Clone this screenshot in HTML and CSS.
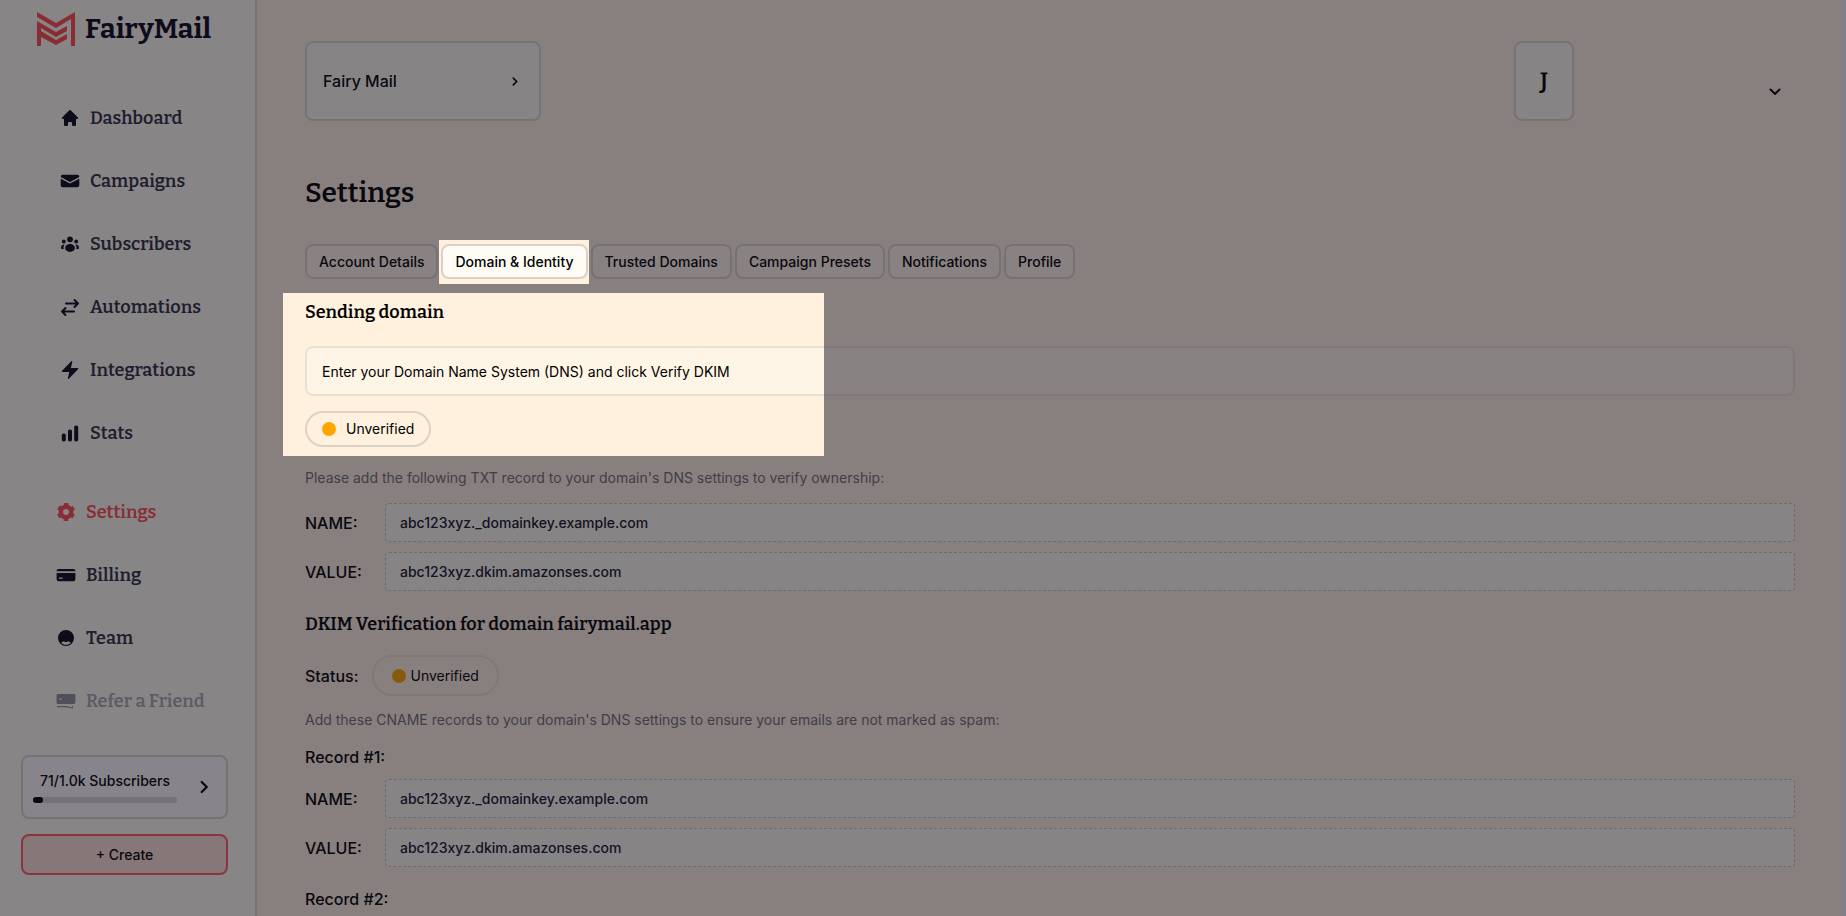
FILE: index.html
```html
<!DOCTYPE html>
<html lang="en">
<head>
  <meta charset="UTF-8">
  <meta name="viewport" content="width=device-width, initial-scale=1.0">
  <title>FairyMail - Settings</title>
  <link rel="stylesheet" href="styles.css">
</head>
<body>
  <aside class="sidebar">
    <a class="logo" href="#">
      <svg class="logo-mark" viewBox="0 0 38 34">
        <path d="M0 0l19 11L38 0v34h-4V7L19 16 0 5z"/>
        <path d="M0 9l19 11 11-6v5l-11 6L4 16v3l15 9 11-6v5l-11 6L4 25v9H0z"/>
      </svg>
      <span>FairyMail</span>
    </a>

    <nav class="menu">
      <a href="#">
        <svg viewBox="0 0 20 20"><path d="M9.3 2.3a1 1 0 0 1 1.4 0l7 7a1 1 0 0 1-.7 1.7h-1v6a1 1 0 0 1-1 1h-2a1 1 0 0 1-1-1v-2a1 1 0 0 0-1-1H9a1 1 0 0 0-1 1v2a1 1 0 0 1-1 1H5a1 1 0 0 1-1-1v-6H3a1 1 0 0 1-.7-1.7z"/></svg>
        Dashboard
      </a>
      <a href="#">
        <svg viewBox="0 0 20 20"><path d="M.7 6a2 2 0 0 1 2-2.200h14.600a2 2 0 0 1 2 2.200L10 10.900z"/><path d="M.7 7.700L10 12.600l9.300-4.900v6.500a2 2 0 0 1-2 2H2.700a2 2 0 0 1-2-2z"/></svg>
        Campaigns
      </a>
      <a href="#">
        <svg viewBox="0 0 20 20"><circle cx="10" cy="5.300" r="2.900"/><circle cx="3.800" cy="7.500" r="1.900"/><circle cx="16.200" cy="7.500" r="1.900"/><ellipse cx="10" cy="14" rx="4.900" ry="3.900"/><path d="M3.900 10.500c-2 .2-3.200 1.800-2.900 4 .8.600 1.700.7 2.700.6-.4-1.900 0-3.300.9-4.500zM16.100 10.500c2 .2 3.200 1.800 2.900 4-.8.600-1.700.7-2.700.6.400-1.900 0-3.300-.9-4.500z"/></svg>
        Subscribers
      </a>
      <a href="#">
        <svg class="line" viewBox="0 0 20 20"><path d="M6 6.500h12M14.500 3L18 6.500 14.500 10M14 14.500H2M5.500 11L2 14.500 5.500 18"/></svg>
        Automations
      </a>
      <a href="#">
        <svg viewBox="0 0 20 20"><path d="M11.300 1.300c.6-.5 1.200-.1 1 .6L10.900 8h6.600c.8 0 1 .7.500 1.200L8.900 18.800c-.6.500-1.200.1-1-.6L9.300 12H2.600c-.8 0-1-.7-.5-1.200z"/></svg>
        Integrations
      </a>
      <a href="#">
        <svg viewBox="0 0 20 20"><rect x="1.800" y="10.500" width="4" height="8" rx="1.700"/><rect x="8" y="6.500" width="4" height="12" rx="1.700"/><rect x="14.200" y="2.500" width="4" height="16" rx="1.700"/></svg>
        Stats
      </a>
    </nav>

    <nav class="menu menu-account">
      <a class="active" href="#">
        <svg class="gear" viewBox="0 0 20 20"><circle cx="10" cy="10" r="5.200" stroke-width="4.400"/><circle cx="10" cy="10" r="7.200" stroke-width="3.600" stroke-dasharray="4.200 3.340" transform="rotate(13.300 10 10)"/></svg>
        Settings
      </a>
      <a href="#">
        <svg viewBox="0 0 20 20"><path d="M.6 6.300c0-1.500.8-2.300 2-2.300h14.800c1.200 0 2 .8 2 2.300z"/><path fill-rule="evenodd" d="M.6 8h18.800v6.200a2 2 0 0 1-2 2H2.600a2 2 0 0 1-2-2zM3 12.500v1.300h3.500v-1.300z"/></svg>
        Billing
      </a>
      <a href="#">
        <svg viewBox="0 0 20 20"><path fill-rule="evenodd" d="M10 2a8 8 0 1 1 0 16 8 8 0 0 1 0-16zM5.200 14.700c1.200 1.400 2.900 2.100 4.800 2.100s3.600-.7 4.800-2.100c-1.200-1.200-2.500-1.500-3.200-1.200a3 3 0 0 1-3.200 0c-.7-.3-2 0-3.200 1.200z"/></svg>
        Team
      </a>
      <a class="disabled" href="#">
        <svg viewBox="0 0 20 20"><path fill-rule="evenodd" d="M2 3h16a1.400 1.400 0 0 1 1.400 1.400v7.200A1.400 1.400 0 0 1 18 13H2a1.400 1.400 0 0 1-1.400-1.400V4.400A1.400 1.400 0 0 1 2 3zm2.500 4a1 1 0 1 0 0 2 1 1 0 0 0 0-2z"/><path d="M1 15h9l6 1.200V15h1v2.600L9.500 16.200H1z"/></svg>
        Refer a Friend
      </a>
    </nav>

    <a class="usage" href="#">
      <span class="usage-info">
        <span>71/1.0k Subscribers</span>
        <span class="usage-bar"><span class="usage-fill" style="width: 7%"></span></span>
      </span>
      <svg class="arrow" viewBox="0 0 8 12"><path d="M1.500 1.500L6 6l-4.500 4.500"/></svg>
    </a>
    <button class="create" type="button">+ Create</button>
  </aside>

  <main>
    <header>
      <button class="workspace" type="button">
        Fairy Mail
        <svg class="arrow-small" viewBox="0 0 5 8"><path d="M1 1l3 3-3 3"/></svg>
      </button>
      <div class="user">
        <span class="avatar">J</span>
        <button class="user-menu" type="button" aria-label="Account menu">
          <svg class="arrow-down" viewBox="0 0 12 8"><path d="M1.500 1.500L6 6l4.500-4.500"/></svg>
        </button>
      </div>
    </header>

    <h1>Settings</h1>

    <div class="tabs">
      <button type="button">Account Details</button>
      <button class="selected" type="button">Domain &amp; Identity</button>
      <button type="button">Trusted Domains</button>
      <button type="button">Campaign Presets</button>
      <button type="button">Notifications</button>
      <button type="button">Profile</button>
    </div>

    <h2><label for="domain">Sending domain</label></h2>
    <input class="domain" id="domain" type="text" value="Enter your Domain Name System (DNS) and click Verify DKIM">
    <div class="badge"><span class="dot"></span>Unverified</div>

    <p class="hint">Please add the following TXT record to your domain's DNS settings to verify ownership:</p>
    <div class="records">
      <label for="txt-name">NAME:</label>
      <input id="txt-name" type="text" value="abc123xyz._domainkey.example.com" readonly>
      <label for="txt-value">VALUE:</label>
      <input id="txt-value" type="text" value="abc123xyz.dkim.amazonses.com" readonly>
    </div>

    <h2 class="dkim-title">DKIM Verification for domain fairymail.app</h2>
    <div class="status">
      <span>Status:</span>
      <div class="badge badge-light"><span class="dot"></span>Unverified</div>
    </div>

    <p class="hint hint-dkim">Add these CNAME records to your domain's DNS settings to ensure your emails are not marked as spam:</p>
    <h3>Record #1:</h3>
    <div class="records">
      <label for="cname-name">NAME:</label>
      <input id="cname-name" type="text" value="abc123xyz._domainkey.example.com" readonly>
      <label for="cname-value">VALUE:</label>
      <input id="cname-value" type="text" value="abc123xyz.dkim.amazonses.com" readonly>
    </div>
    <h3>Record #2:</h3>
  </main>

  <div class="backdrop"></div>
</body>
</html>
```

FILE: styles.css
```css
* {
  box-sizing: border-box;
}

body {
  font-family: Inter, 'Liberation Sans', sans-serif;
  font-size: 14px;
  line-height: 20px;
  margin: 0;
  height: 100vh;
  display: flex;
  overflow: hidden;
  color: #000;
  background-color: #fff1de;
}

button,
input {
  font: inherit;
  color: inherit;
}

a {
  color: inherit;
  text-decoration: none;
}

/* Sidebar */
.sidebar {
  width: 257px;
  flex-shrink: 0;
  padding: 12px 27px 0 21px;
  border-right: 2px solid #dad6cf;
  background-color: #fffaf0;
}

.logo {
  display: flex;
  align-items: center;
  gap: 10px;
  height: 34px;
  padding-left: 16px;
  font-family: Bitter, 'DejaVu Serif Condensed', serif;
  font-size: 28px;
  font-weight: 700;
  color: #0a0818;
}

.logo-mark {
  width: 38px;
  height: 34px;
  fill: #ff4a4a;
}

.menu {
  display: flex;
  flex-direction: column;
  gap: 39px;
  margin-top: 60px;
  padding-left: 39px;
  font-family: Bitter, 'DejaVu Serif Condensed', serif;
  font-size: 18px;
  font-weight: 600;
  line-height: 24px;
  color: #2f2c3b;
}

.menu a {
  display: flex;
  align-items: center;
  gap: 10px;
  white-space: nowrap;
}

.menu svg {
  width: 20px;
  height: 20px;
  fill: #0a0818;
}

.menu svg.line {
  fill: none;
  stroke: #0a0818;
  stroke-width: 2;
  stroke-linecap: round;
  stroke-linejoin: round;
}

.menu-account {
  margin-top: 55px;
  padding-left: 35px;
}

.menu .active {
  color: #ff4a4a;
}

.menu .gear {
  fill: none;
  stroke: #ff4a4a;
}

.menu .disabled {
  color: #a9a5a9;
}

.menu .disabled svg {
  fill: #8f8c92;
}

.usage {
  display: flex;
  justify-content: space-between;
  align-items: center;
  height: 64px;
  margin-top: 42px;
  padding: 0 17px 0 10px;
  border: 2px solid #dad6cf;
  border-radius: 8px;
  background-color: #fdfaf8;
  font-weight: 500;
}

.usage-info {
  display: flex;
  flex-direction: column;
  gap: 6px;
  width: 144px;
  text-align: center;
}

.usage-bar {
  height: 6px;
  border-radius: 3px;
  background-color: #d8d4d0;
}

.usage-fill {
  display: block;
  height: 6px;
  min-width: 10px;
  border-radius: 3px;
  background-color: #000;
}

.arrow,
.arrow-small,
.arrow-down {
  fill: none;
  stroke: #000;
  stroke-width: 2;
  stroke-linecap: round;
  stroke-linejoin: round;
}

.arrow {
  width: 9px;
  height: 14px;
}

.create {
  width: 100%;
  height: 41px;
  margin-top: 15px;
  border: 2px solid #ff5a60;
  border-radius: 8px;
  background-color: #ffdfd2;
  font-weight: 500;
}

/* Main content */
main {
  flex: 1;
  min-width: 0;
  padding: 41px 48px 0;
  border-right: 3px solid #eaf0f4;
}

header {
  display: flex;
  justify-content: space-between;
}

.workspace,
.avatar {
  display: flex;
  align-items: center;
  height: 80px;
  border: 2px solid #dad6cf;
  border-radius: 8px;
  background-color: #fdf9ec;
}

.workspace {
  width: 236px;
  justify-content: space-between;
  padding: 0 21px 0 16px;
  font-size: 16px;
  font-weight: 500;
}

.arrow-small {
  width: 6px;
  height: 9px;
  stroke-width: 1.500;
}

.user {
  display: flex;
  justify-content: space-between;
  width: 281px;
}

.avatar {
  width: 60px;
  justify-content: center;
  font-family: Bitter, 'DejaVu Serif Condensed', serif;
  font-size: 24px;
  font-weight: 600;
}

.user-menu {
  padding: 22px 14px 0;
  border: 0;
  background: none;
}

.arrow-down {
  display: block;
  width: 12px;
  height: 8px;
}

h1,
h2 {
  font-family: Bitter, 'DejaVu Serif Condensed', serif;
  font-weight: 600;
}

h1 {
  margin: 52px 0 31px;
  font-size: 28px;
  line-height: 40px;
}

h2 {
  margin: 21px 0 22px;
  font-size: 18px;
  line-height: 24px;
}

h3 {
  margin: 17px 0 12px;
  font-size: 16px;
  font-weight: 500;
}

.tabs {
  display: flex;
  gap: 3px;
}

.tabs button {
  height: 35px;
  padding: 0 12px;
  border: 2px solid #dad2c6;
  border-radius: 8px;
  background-color: #fff4e6;
  font-weight: 500;
}

.tabs .selected {
  background-color: #fffcf6;
}

.domain {
  display: block;
  width: 100%;
  height: 50px;
  padding: 0 15px;
  border: 2px solid #ebe1d2;
  border-radius: 8px;
  background-color: #fff5e6;
}

.badge {
  display: flex;
  align-items: center;
  gap: 10px;
  width: fit-content;
  height: 36px;
  margin-top: 15px;
  padding: 0 15px;
  border: 2px solid #dad2c6;
  border-radius: 20px;
}

.dot {
  width: 14px;
  height: 14px;
  border-radius: 50%;
  background-color: #ffa500;
}

.hint {
  margin: 21px 0 15px;
  color: #6f6d73;
}

.records {
  display: grid;
  grid-template-columns: 70px 1fr;
  gap: 10px;
  align-items: center;
}

.records label,
.status {
  font-size: 16px;
  font-weight: 500;
}

.records input {
  height: 39px;
  padding: 0 14px;
  border: 1px dashed #c9c4c0;
  border-radius: 4px;
  background-color: #fdf9ec;
  color: #14122a;
  font-weight: 500;
}

.dkim-title {
  margin-bottom: 19px;
}

.status {
  display: flex;
  align-items: center;
  gap: 14px;
}

.badge-light {
  gap: 4px;
  height: 41px;
  margin-top: 0;
  padding: 0 18px;
  border-color: #ebe1d2;
  font-size: 14px;
  font-weight: normal;
}

.hint-dkim {
  margin-top: 14px;
}

.records + h3 {
  margin-top: 22px;
}

/* Dims the page except for the tab and the sending domain block */
.backdrop {
  position: absolute;
  inset: 0;
  pointer-events: none;
  background-color: rgba(18, 15, 30, 0.5);
  clip-path: path(evenodd, 'M0 0H9999V9999H0ZM439 240H589V284H439ZM283 293H824V456H283Z');
}
```
